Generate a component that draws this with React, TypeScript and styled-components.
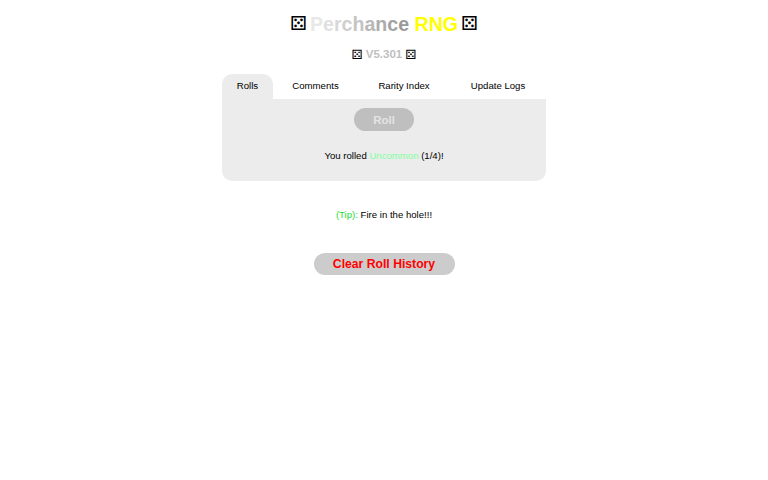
import React from 'react';
import styled, { createGlobalStyle } from 'styled-components';

const GlobalStyle = createGlobalStyle`
  html, body {
    margin: 0;
    padding: 0;
    background: #fff;
    font-family: "Liberation Sans", Arial, sans-serif;
  }
`;

const Page = styled.div`
  display: flex;
  flex-direction: column;
  align-items: center;
  padding-top: 13px;
`;

const Title = styled.h1`
  margin: 0;
  height: 22px;
  font-size: 19.6px;
  line-height: 22px;
  font-weight: bold;
  display: flex;
  align-items: center;
  gap: 3px;
`;

const Die = styled.span<{ size: number }>`
  font-family: "DejaVu Sans", sans-serif;
  font-weight: normal;
  color: #000;
  font-size: ${props => props.size}px;
`;

const Letter = styled.span<{ shade: string }>`
  color: ${props => props.shade};
`;

const Version = styled.div`
  margin-top: 9px;
  height: 20px;
  display: flex;
  align-items: center;
  gap: 3px;
  font-size: 11.5px;
  font-weight: bold;
  color: #c0c0c0;
`;

const Tabs = styled.div`
  margin-top: 10px;
  width: 324px;
  display: flex;
  height: 25px;
`;

const Tab = styled.div<{ active?: boolean; width: number }>`
  width: ${props => props.width}px;
  border-radius: 10px 10px 0 0;
  background: ${props => (props.active ? '#ececec' : 'transparent')};
  font-size: 9.6px;
  line-height: 24px;
  text-align: center;
  color: #000;
`;

const Panel = styled.div`
  width: 324px;
  height: 82px;
  box-sizing: border-box;
  padding-top: 9px;
  background: #ececec;
  border-radius: 0 0 10px 10px;
  display: flex;
  flex-direction: column;
  align-items: center;
`;

const RollButton = styled.button`
  width: 60px;
  height: 23px;
  border: none;
  border-radius: 12px;
  background: #bfbfbf;
  color: #e4e4e4;
  font-family: inherit;
  font-size: 11.5px;
  font-weight: bold;
  padding: 0;
`;

const Result = styled.div`
  margin-top: 19px;
  font-size: 9.6px;
  line-height: 12px;
  color: #000;
`;

const Rarity = styled.span`
  color: #7fff9f;
`;

const TipLine = styled.div`
  margin-top: 28px;
  font-size: 9.6px;
  line-height: 12px;
  color: #000;
`;

const TipLabel = styled.span`
  color: #22dd33;
`;

const ClearButton = styled.button`
  margin-top: 32px;
  width: 141px;
  height: 22px;
  border: none;
  border-radius: 11px;
  background: #cccccc;
  color: #ff0000;
  font-family: inherit;
  font-size: 12.2px;
  font-weight: bold;
  padding: 0;
`;

const titleLetters: [string, string][] = [
  ['P', '#e8e8e8'],
  ['e', '#e0e0e0'],
  ['r', '#d8d8d8'],
  ['c', '#cfcfcf'],
  ['h', '#c4c4c4'],
  ['a', '#b8b8b8'],
  ['n', '#adadad'],
  ['c', '#a3a3a3'],
  ['e', '#9a9a9a'],
  [' ', '#fff'],
  ['R', '#ffff00'],
  ['N', '#ffff00'],
  ['G', '#ffff00'],
];

const tabs = [
  { label: 'Rolls', width: 51 },
  { label: 'Comments', width: 85 },
  { label: 'Rarity Index', width: 92 },
  { label: 'Update Logs', width: 96 },
];

const App: React.FC = () => {
  return (
    <>
      <GlobalStyle />
      <Page>
        <Title>
          <Die size={19.5}>⚄</Die>
          <span style={{ whiteSpace: 'pre' }}>
            {titleLetters.map(([ch, shade], i) => (
              <Letter key={i} shade={shade}>{ch}</Letter>
            ))}
          </span>
          <Die size={19.5}>⚄</Die>
        </Title>
        <Version>
          <Die size={13}>⚄</Die>
          V5.301
          <Die size={13}>⚄</Die>
        </Version>
        <Tabs>
          {tabs.map((tab, i) => (
            <Tab key={tab.label} active={i === 0} width={tab.width}>{tab.label}</Tab>
          ))}
        </Tabs>
        <Panel>
          <RollButton>Roll</RollButton>
          <Result>You rolled <Rarity>Uncommon</Rarity> (1/4)!</Result>
        </Panel>
        <TipLine><TipLabel>(Tip):</TipLabel> Fire in the hole!!!</TipLine>
        <ClearButton>Clear Roll History</ClearButton>
      </Page>
    </>
  );
};

export default App;
